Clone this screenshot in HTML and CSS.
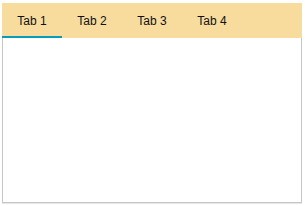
FILE: index.html
```html
<!DOCTYPE html>
<html lang="en">

<head>
    <meta charset="UTF-8">
    <meta name="viewport" content="width=device-width, initial-scale=1.0">
    <title>Tabs</title>
    <link rel="stylesheet" href="styles.css">
</head>

<body>
    <div class="tabs">
        <div class="tab-strip">
            <div class="tab active">Tab 1</div>
            <div class="tab">Tab 2</div>
            <div class="tab">Tab 3</div>
            <div class="tab">Tab 4</div>
        </div>
        <div class="tab-content"></div>
    </div>
</body>

</html>
```

FILE: styles.css
```css
body {
    margin: 0;
    padding: 3px 3px 3px 2px;
    font-family: 'Segoe UI', 'Liberation Sans', Arial, sans-serif;
    background: white;
}

.tabs {
    width: 300px;
    height: 200px;
    display: flex;
    flex-direction: column;
}

.tab-strip {
    display: flex;
    height: 35px;
    background-color: #f7dc9e;
}

.tab {
    width: 60px;
    box-sizing: border-box;
    padding-top: 11px;
    text-align: center;
    font-size: 12px;
    color: #111;
    border-bottom: 2px solid transparent;
}

.tab.active {
    border-bottom-color: #0a9bb8;
}

.tab-content {
    flex: 1;
    border: 1px solid #c6c6c6;
    border-top: none;
    box-shadow: 0 1px 0 #e6e6e6;
}
```
